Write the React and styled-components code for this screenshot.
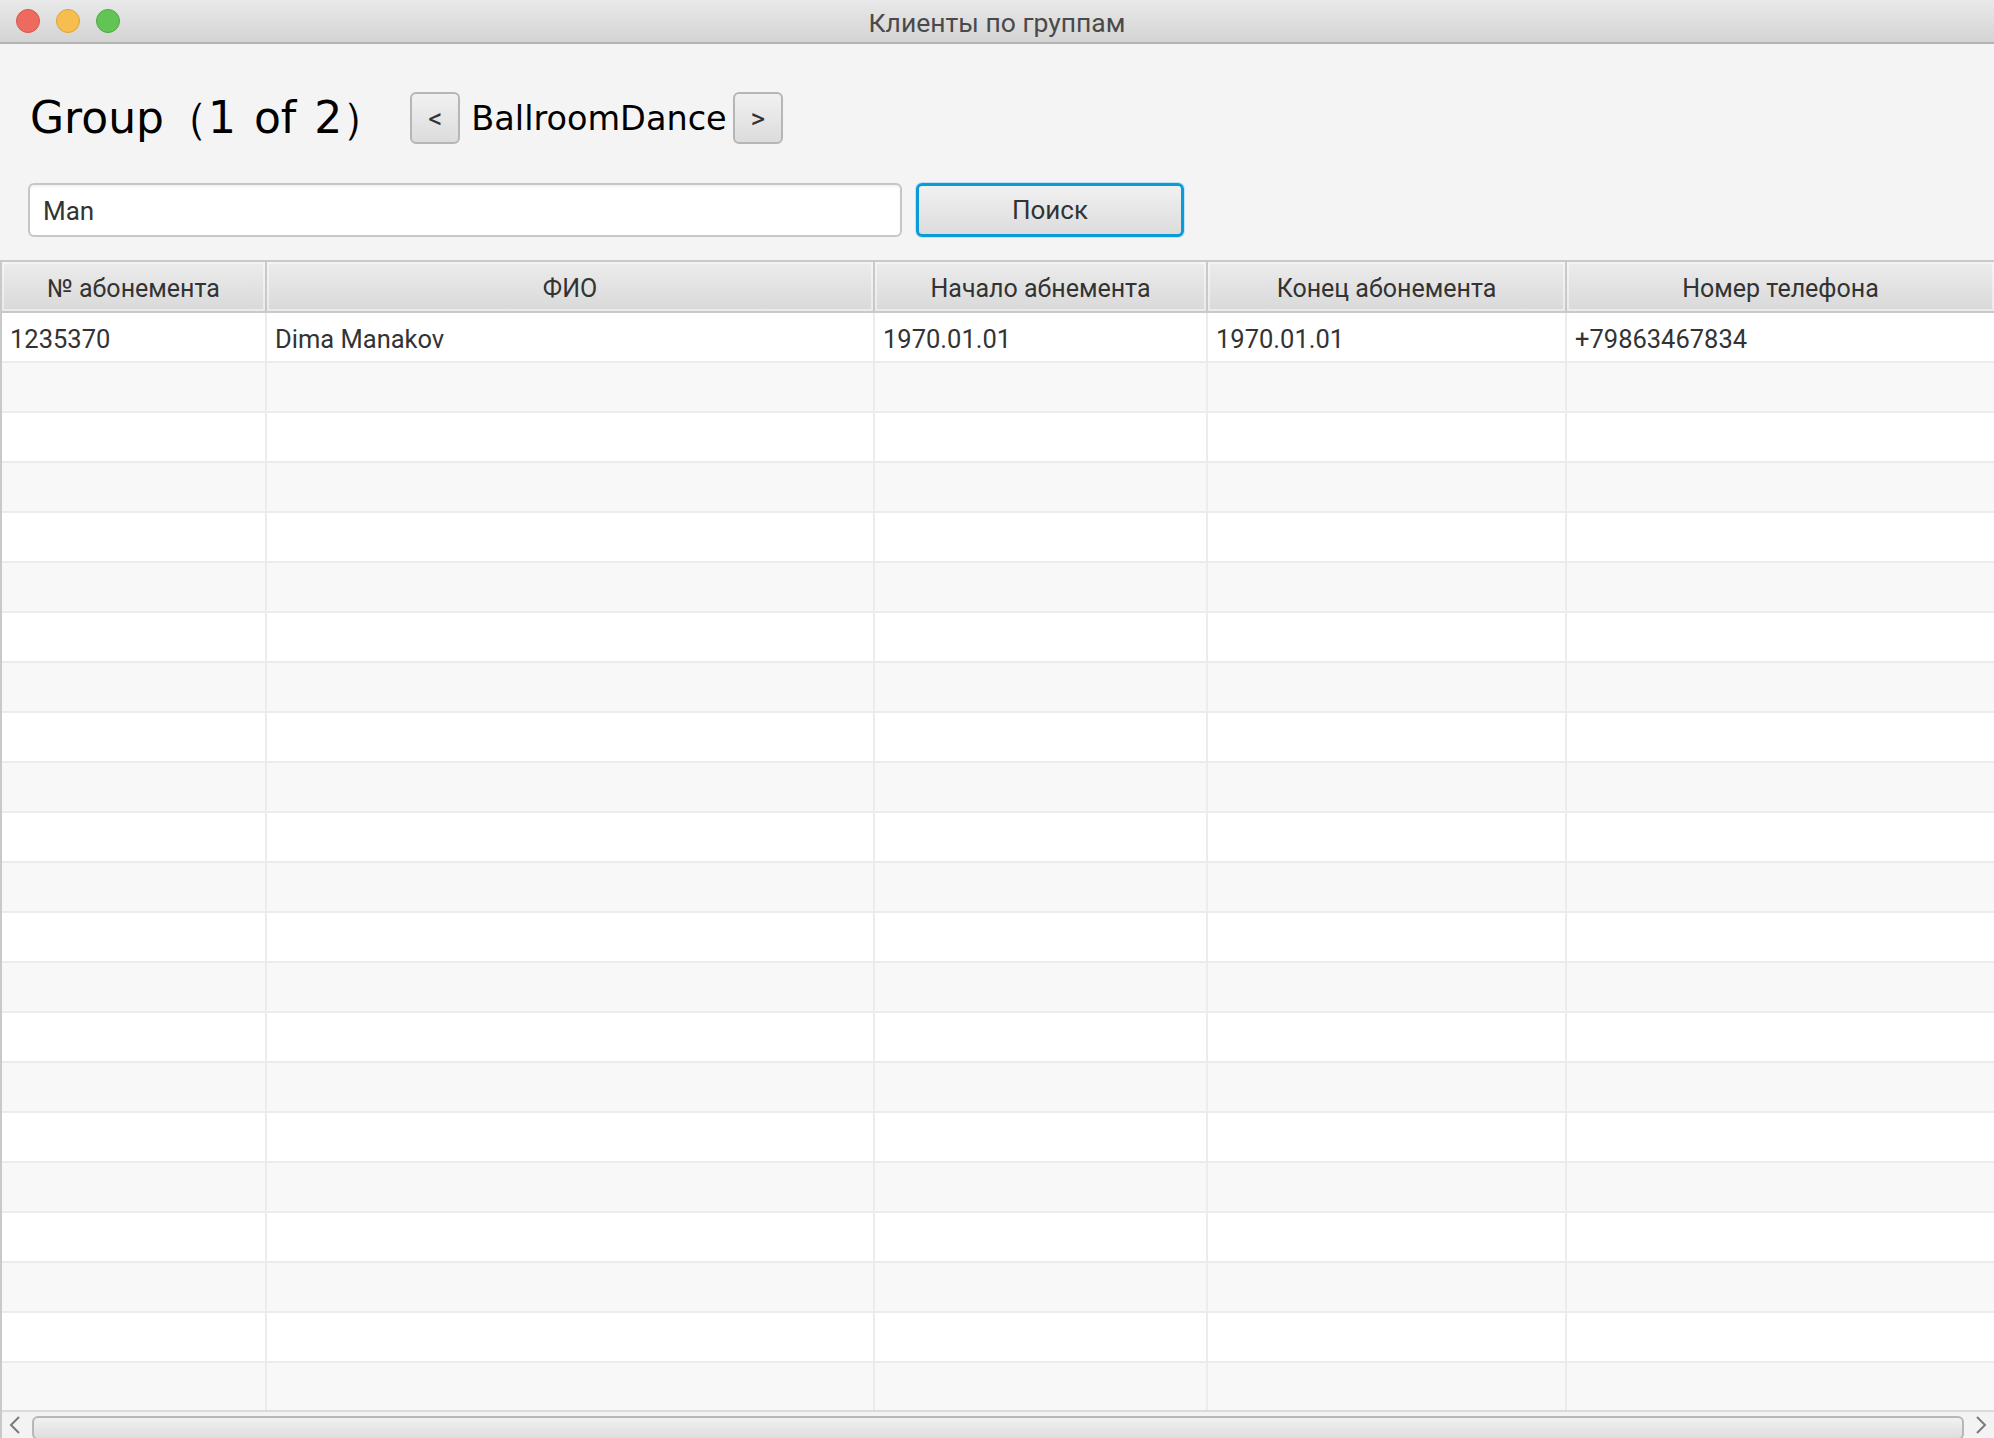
import styled, { createGlobalStyle } from "styled-components";

const GlobalStyle = createGlobalStyle`
  html, body {
    margin: 0;
    padding: 0;
    background: #f4f4f4;
    overflow: hidden;
  }
  * { box-sizing: border-box; }
`;

const Window = styled.div`
  width: 1994px;
  height: 1438px;
  display: flex;
  flex-direction: column;
  background: #f4f4f4;
  font-family: Roboto, "Liberation Sans", sans-serif;
  color: #333;
`;

const TitleBar = styled.div`
  height: 44px;
  flex-shrink: 0;
  display: grid;
  grid-template-columns: 200px 1fr 200px;
  align-items: center;
  background: linear-gradient(#e9e9e9, #d4d4d4);
  border-bottom: 2px solid #b3b3b3;
`;

const Lights = styled.div`
  display: flex;
  gap: 16px;
  padding-left: 16px;
`;

const Light = styled.span`
  width: 24px;
  height: 24px;
  border-radius: 50%;
  background: ${(p) => p.color};
  border: 1px solid ${(p) => p.edge};
`;

const WindowTitle = styled.div`
  text-align: center;
  font-size: 26.5px;
  color: #4a4a4a;
  padding-top: 3px;
`;

const Top = styled.div`
  display: flex;
  flex-direction: column;
  padding: 48px 0 0 28px;
`;

const GroupRow = styled.div`
  display: flex;
  align-items: center;
  height: 52px;
`;

const Heading = styled.h1`
  margin: 0 24px 0 2px;
  font-family: "DejaVu Sans", sans-serif;
  font-weight: normal;
  font-size: 44px;
  color: #000;
  word-spacing: 4px;
`;

const GroupName = styled.span`
  font-family: "DejaVu Sans", sans-serif;
  font-size: 33.5px;
  color: #000;
  margin: 0 6px 0 11px;
`;

const Button = styled.button`
  height: ${(p) => p.h || 52}px;
  width: ${(p) => p.w}px;
  padding: 0;
  border: ${(p) => (p.focused ? "3px solid #0b9bd7" : "2px solid #b6b6b6")};
  border-radius: 6px;
  background: linear-gradient(#f1f1f1, #dcdcdc);
  box-shadow: ${(p) => (p.focused ? "0 0 0 1px #bfe3f3" : "none")};
  font-family: Roboto, "Liberation Sans", sans-serif;
  font-size: ${(p) => p.fs || 26}px;
  color: #333;
  cursor: pointer;
`;

const SearchRow = styled.div`
  display: flex;
  gap: 14px;
  margin-top: 39px;
  height: 54px;
`;

const SearchInput = styled.input`
  width: 874px;
  height: 54px;
  border: 2px solid #c6c6c6;
  border-radius: 6px;
  background: #fff;
  box-shadow: inset 0 2px 2px rgba(0, 0, 0, 0.05);
  padding: 2px 0 0 13px;
  font-family: Roboto, "Liberation Sans", sans-serif;
  font-size: 26px;
  color: #333;
  outline: none;
`;

const Table = styled.div`
  margin-top: 23px;
  flex: 1;
  display: flex;
  flex-direction: column;
  border-left: 2px solid #c9c9c9;
  overflow: hidden;
`;

const cols = "265px 608px 333px 359px 1fr";

const HeaderRow = styled.div`
  display: grid;
  grid-template-columns: ${cols};
  height: 53px;
  flex-shrink: 0;
  border-top: 2px solid #c9c9c9;
  border-bottom: 2px solid #c9c9c9;
`;

const HeadCell = styled.div`
  display: flex;
  align-items: center;
  justify-content: center;
  padding-top: 3px;
  background: linear-gradient(#ececec, #d9d9d9);
  border-right: 2px solid #c9c9c9;
  box-shadow: inset 0 0 0 2px rgba(255, 255, 255, 0.45);
  font-size: 25px;
  color: #333;
  &:last-child { border-right: none; }
`;

const Body = styled.div`
  flex: 1;
  overflow: hidden;
`;

const Row = styled.div`
  display: grid;
  grid-template-columns: ${cols};
  height: 50px;
  background: ${(p) => (p.odd ? "#f8f8f8" : "#fff")};
  border-bottom: 2px solid #ececec;
`;

const Cell = styled.div`
  display: flex;
  align-items: center;
  padding: 3px 0 0 8px;
  border-right: 2px solid #ececec;
  font-size: 25.5px;
  color: #333;
  white-space: nowrap;
  &:last-child { border-right: none; }
`;

const ScrollBar = styled.div`
  height: 28px;
  flex-shrink: 0;
  display: flex;
  align-items: center;
  gap: 10px;
  padding: 0 6px;
  background: #f3f3f3;
  border-top: 2px solid #dadada;
`;

const Thumb = styled.div`
  flex: 1;
  height: 24px;
  margin-top: 4px;
  align-self: flex-start;
  border: 2px solid #b7b7b7;
  border-radius: 6px;
  background: linear-gradient(#f1f1f1, #dedede);
`;

const Chevron = ({ dir }) => (
  <svg width="14" height="22" viewBox="0 0 14 22">
    <path
      d={dir === "left" ? "M11 3 L3 11 L11 19" : "M3 3 L11 11 L3 19"}
      fill="none"
      stroke="#7a7a7a"
      strokeWidth="2"
    />
  </svg>
);

const data = [["1235370", "Dima Manakov", "1970.01.01", "1970.01.01", "+79863467834"]];

const App = () => {
  const rows = Array.from({ length: 22 }, (_, i) => data[i] || ["", "", "", "", ""]);
  return (
    <Window>
      <GlobalStyle />
      <TitleBar>
        <Lights>
          <Light color="#ee6a5f" edge="#d5574c" />
          <Light color="#f6be4f" edge="#dca43a" />
          <Light color="#61c454" edge="#4fa942" />
        </Lights>
        <WindowTitle>Клиенты по группам</WindowTitle>
        <div />
      </TitleBar>
      <Top>
        <GroupRow>
          <Heading>Group（1 of 2）</Heading>
          <Button w={50} fs={28}>&lt;</Button>
          <GroupName>BallroomDance</GroupName>
          <Button w={50} fs={28}>&gt;</Button>
        </GroupRow>
        <SearchRow>
          <SearchInput defaultValue="Man" />
          <Button w={268} h={54} focused>Поиск</Button>
        </SearchRow>
      </Top>
      <Table>
        <HeaderRow>
          <HeadCell>№ абонемента</HeadCell>
          <HeadCell>ФИО</HeadCell>
          <HeadCell>Начало абнемента</HeadCell>
          <HeadCell>Конец абонемента</HeadCell>
          <HeadCell>Номер телефона</HeadCell>
        </HeaderRow>
        <Body>
          {rows.map((r, i) => (
            <Row key={i} odd={i % 2 === 1}>
              {r.map((c, j) => (
                <Cell key={j}>{c}</Cell>
              ))}
            </Row>
          ))}
        </Body>
        <ScrollBar>
          <Chevron dir="left" />
          <Thumb />
          <Chevron dir="right" />
        </ScrollBar>
      </Table>
    </Window>
  );
};

export default App;
